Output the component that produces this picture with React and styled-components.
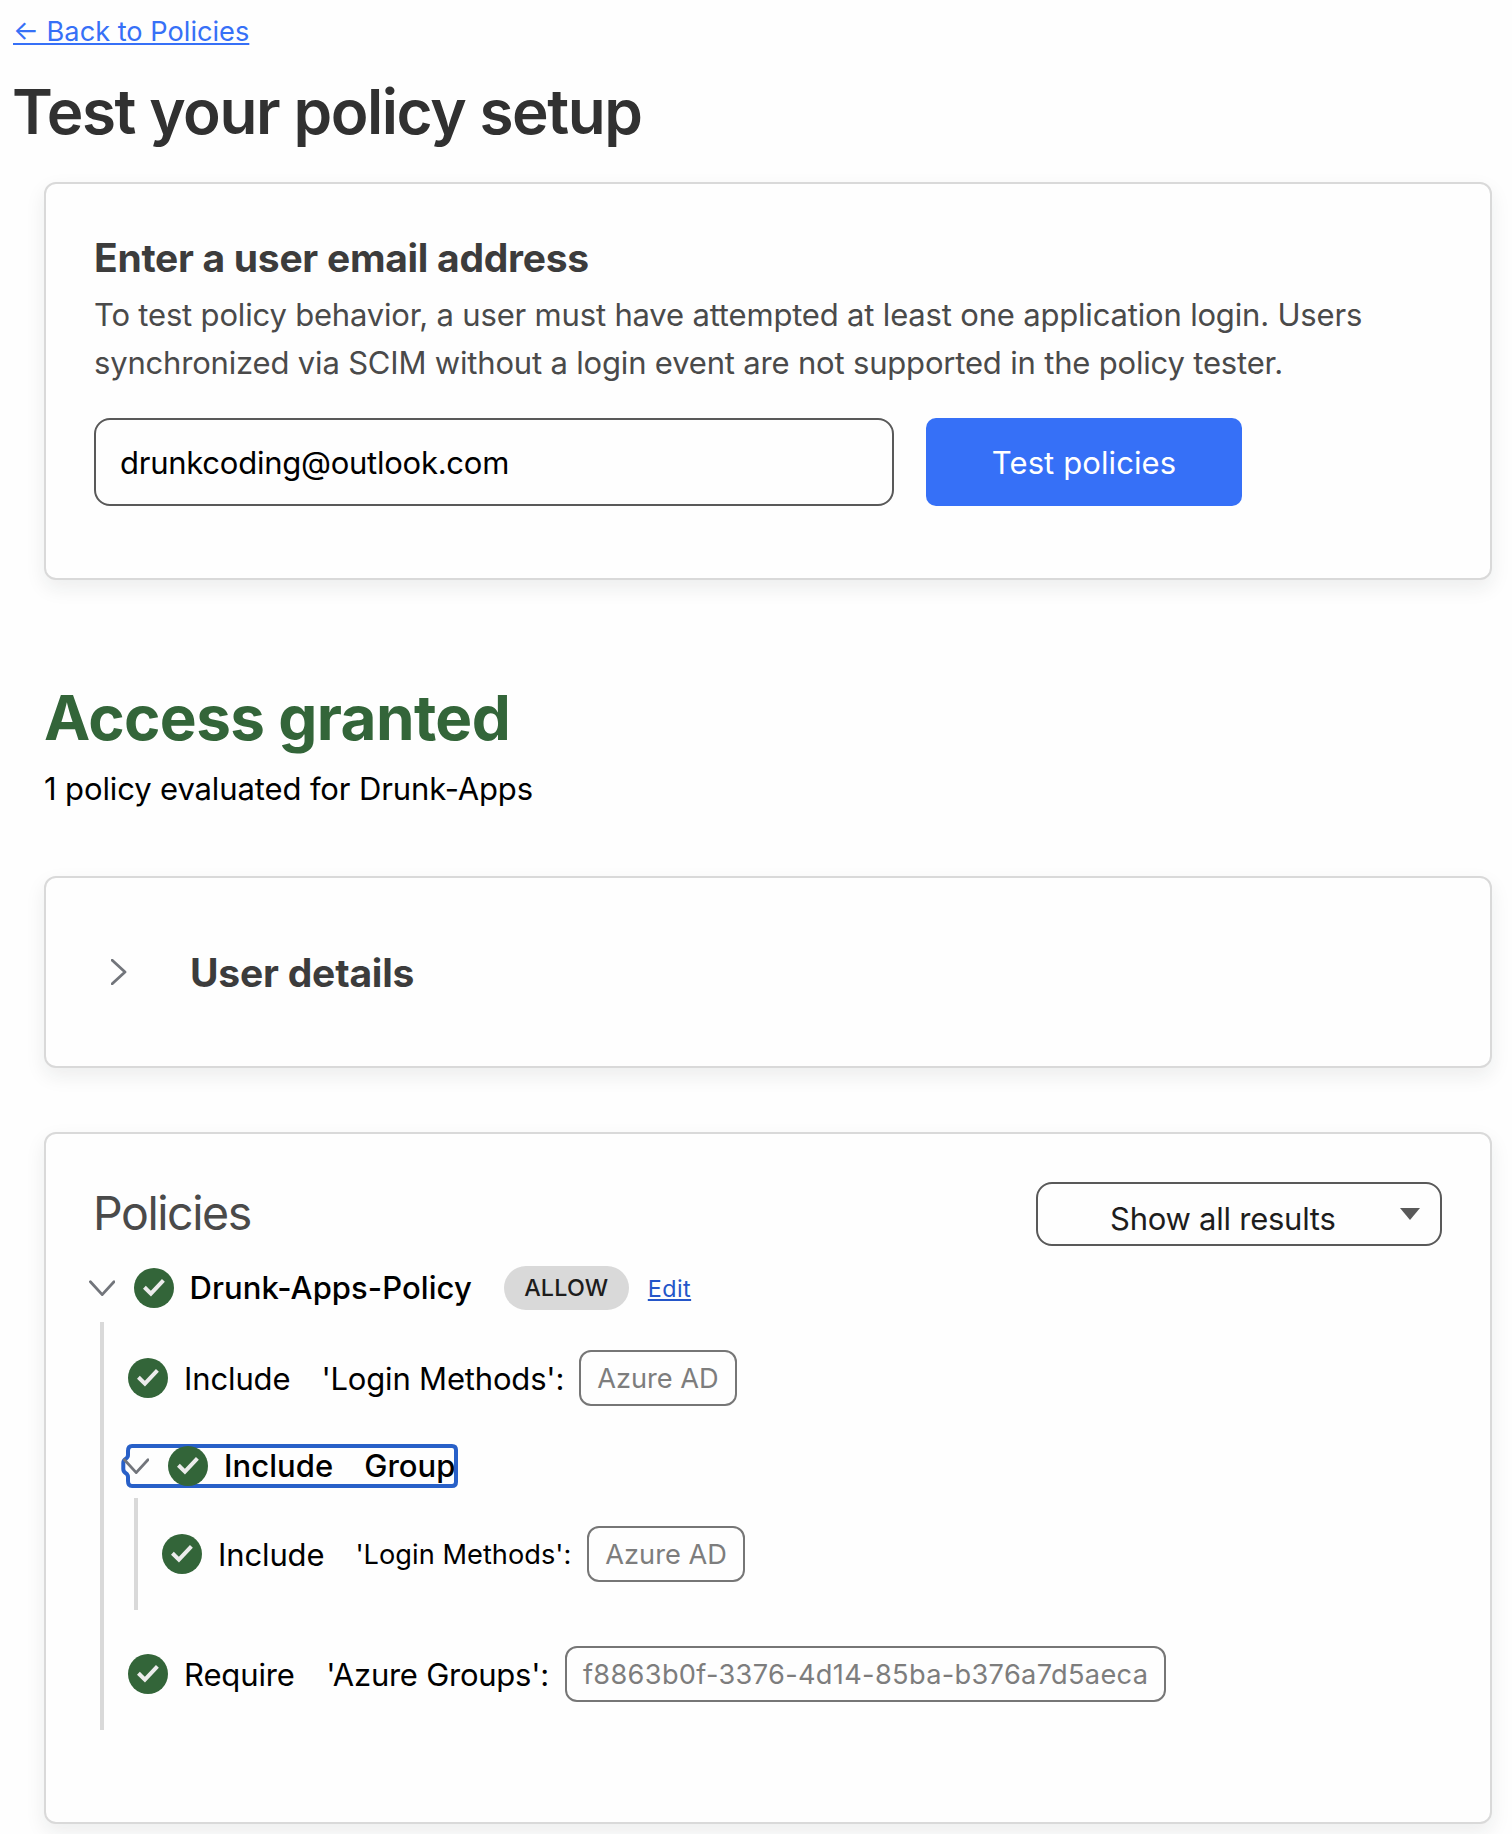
import React from 'react';
import styled, { createGlobalStyle } from 'styled-components';

const GlobalStyle = createGlobalStyle`
  * { box-sizing: border-box; }
  body {
    margin: 0;
    background: #fefefe;
    color: #000;
    font-family: Inter, 'Liberation Sans', sans-serif;
  }
  h1, h2, h3, p { margin: 0; }
`;

const Page = styled.main`
  width: 1512px;
  height: 1834px;
  overflow: hidden;
  padding-top: 12px;
  display: flex;
  flex-direction: column;
`;

const Header = styled.header`
  display: flex;
  flex-direction: column;
  align-items: flex-start;
  gap: 24px;
  padding-left: 13px;
`;

const BackLink = styled.a`
  font-size: 27.2px;
  line-height: 40px;
  color: #3670f7;
  text-decoration: underline;
  text-decoration-thickness: 2px;
  text-underline-offset: 2px;
  text-decoration-skip-ink: none;
`;

const PageTitle = styled.h1`
  margin-left: -1px;
  font-size: 62px;
  font-weight: 620;
  line-height: 72px;
  letter-spacing: -1.42px;
  color: #313131;
`;

const Content = styled.div`
  display: flex;
  flex-direction: column;
  margin: 34px 20px 0 44px;
`;

const Card = styled.section`
  height: ${(p) => p.$height}px;
  margin-top: ${(p) => p.$gap || 0}px;
  padding: ${(p) => p.$padTop || 0}px 48px 0;
  border: 2px solid #d9d9d9;
  border-radius: 12px;
  background: #fefefe;
  box-shadow: 0 8px 20px rgba(20, 40, 40, 0.08);
`;

const CardTitle = styled.h2`
  padding-top: ${(p) => p.$drop || 0}px;
  font-size: 39px;
  font-weight: 650;
  line-height: 48px;
  letter-spacing: ${(p) => p.$tracking || 0}px;
  color: #3c3c3c;
`;

const Description = styled.p`
  margin-top: 9px;
  font-size: 31px;
  line-height: 48px;
  letter-spacing: -0.18px;
  color: #4a4a4a;
`;

const Form = styled.form`
  display: flex;
  gap: 32px;
  margin-top: 31px;
`;

const EmailInput = styled.input`
  width: 800px;
  height: 88px;
  padding: 0 24px;
  border: 2px solid #595959;
  border-radius: 16px;
  background: transparent;
  color: #000;
  font: 400 31px Inter, 'Liberation Sans', sans-serif;
  letter-spacing: -0.25px;
  outline: none;
`;

const SubmitButton = styled.button`
  width: 316px;
  height: 88px;
  padding: 0;
  border: 0;
  border-radius: 10px;
  background: #3670f7;
  color: #fff;
  font: 400 31px Inter, 'Liberation Sans', sans-serif;
  letter-spacing: 0.1px;
`;

const Verdict = styled.h2`
  margin-top: 98px;
  font-size: 62px;
  font-weight: 700;
  line-height: 80px;
  letter-spacing: -0.65px;
  color: #336539;
`;

const Summary = styled.p`
  margin-top: 7px;
  font-size: 31px;
  line-height: 48px;
  letter-spacing: -0.12px;
`;

const DetailsToggle = styled.div`
  display: flex;
  align-items: center;
  gap: 63px;
  height: 100%;
  padding-left: 17px;
`;

const PoliciesHeader = styled.div`
  display: flex;
  justify-content: space-between;
  height: 64px;
`;

const PoliciesTitle = styled.h2`
  margin-left: -1px;
  font-size: 46.5px;
  font-weight: 400;
  line-height: 63px;
  letter-spacing: -1.45px;
  color: #4a4a4a;
`;

const Select = styled.div`
  display: flex;
  align-items: center;
  justify-content: space-between;
  width: 406px;
  height: 64px;
  padding: 0 20px 0 72px;
  border: 2px solid #595959;
  border-radius: 16px;
  color: #1d1d1d;
`;

const SelectText = styled.span`
  padding-top: 8px;
  font-size: 31px;
  letter-spacing: -0.25px;
`;

const PolicyRow = styled.div`
  display: flex;
  align-items: center;
  height: 44px;
  margin: 20px 0 0 -5px;
`;

const GroupRow = styled.div`
  position: relative;
  display: flex;
  align-items: center;
  height: 40px;
  margin: 40px 0 0 -5px;
`;

const FocusRing = styled.svg`
  position: absolute;
  left: -3px;
  top: -3px;
  overflow: visible;
`;

const RuleRow = styled.div`
  display: flex;
  align-items: center;
  height: 56px;
  margin-top: ${(p) => p.$gap || 0}px;
`;

const Branch = styled.div`
  margin: 12px 0 0 6px;
  padding: 28px 0 28px 24px;
  border-left: 4px solid #d9d9d9;
`;

const Label = styled.span`
  margin-left: ${(p) => p.$gap}px;
  padding-bottom: ${(p) => (p.$strong ? 2 : 0)}px;
  font-size: ${(p) => (p.$small ? 27.2 : 31)}px;
  font-weight: ${(p) => (p.$strong ? 500 : 400)};
  letter-spacing: ${(p) => p.$tracking || 0}px;
  white-space: nowrap;
`;

const Pill = styled.span`
  width: 125px;
  height: 44px;
  margin-left: 32px;
  border-radius: 22px;
  background: #d9d9d9;
  color: #1d1d1d;
  font-size: 23.3px;
  font-weight: 450;
  letter-spacing: 0.2px;
  line-height: 43px;
  text-align: center;
`;

const EditLink = styled.a`
  margin-left: 19px;
  padding-top: 1px;
  color: #2456c9;
  font-size: 23.3px;
  letter-spacing: 0.45px;
  text-decoration: underline;
  text-decoration-thickness: 2px;
  text-underline-offset: 2px;
`;

const Chip = styled.span`
  height: 56px;
  margin-left: ${(p) => p.$gap}px;
  padding: 0 16px;
  border: 2px solid #767676;
  border-radius: 12px;
  color: #7d7d7d;
  font-size: 27.2px;
  letter-spacing: ${(p) => p.$tracking || 0}px;
  line-height: 54px;
  white-space: nowrap;
`;

const IconSvg = styled.svg`
  display: block;
  flex: none;
  position: relative;
  z-index: ${(p) => (p.$raised ? 1 : 'auto')};
  margin-right: ${(p) => p.$after || 0}px;
`;

const ChevronRight = () => (
  <IconSvg width="16" height="26" viewBox="0 0 16 26" fill="none">
    <path d="M1.2 1.2L14 13L1.2 24.8" stroke="#72757b" strokeWidth="2.8" strokeLinecap="round" strokeLinejoin="round" />
  </IconSvg>
);

const ChevronDown = () => (
  <IconSvg width="26" height="18" viewBox="0 0 26 18" fill="none" $after={19} $raised>
    <path d="M1.4 2.7L13.2 15.6L25 2.7" stroke="#72757b" strokeWidth="2.8" strokeLinecap="round" strokeLinejoin="round" />
  </IconSvg>
);

const CheckIcon = () => (
  <IconSvg width="40" height="40" viewBox="0 0 40 40" fill="none">
    <circle cx="20" cy="20" r="20" fill="#336539" />
    <path d="M10.4 19.3L16.9 25.6L29.4 12.4" stroke="#ececec" strokeWidth="4" />
  </IconSvg>
);

const Caret = () => (
  <IconSvg width="20" height="12" viewBox="0 0 20 12">
    <path d="M0 0H20L10 12Z" fill="#595959" />
  </IconSvg>
);

export default function App() {
  return (
    <>
      <GlobalStyle />
      <Page>
        <Header>
          <BackLink>← Back to Policies</BackLink>
          <PageTitle>Test your policy setup</PageTitle>
        </Header>
        <Content>
          <Card $height={398} $padTop={50}>
            <CardTitle $tracking={-0.28}>Enter a user email address</CardTitle>
            <Description>
              To test policy behavior, a user must have attempted at least one application login. Users
              synchronized via SCIM without a login event are not supported in the policy tester.
            </Description>
            <Form>
              <EmailInput defaultValue="drunkcoding@outlook.com" />
              <SubmitButton type="button">Test policies</SubmitButton>
            </Form>
          </Card>

          <Verdict>Access granted</Verdict>
          <Summary>1 policy evaluated for Drunk-Apps</Summary>

          <Card $height={192} $gap={63}>
            <DetailsToggle>
              <ChevronRight />
              <CardTitle $tracking={-0.2} $drop={2}>User details</CardTitle>
            </DetailsToggle>
          </Card>

          <Card $height={692} $gap={64} $padTop={48}>
            <PoliciesHeader>
              <PoliciesTitle>Policies</PoliciesTitle>
              <Select>
                <SelectText>Show all results</SelectText>
                <Caret />
              </Select>
            </PoliciesHeader>

            <PolicyRow>
              <ChevronDown />
              <CheckIcon />
              <Label $gap={15.5} $strong $tracking={0.06}>Drunk-Apps-Policy</Label>
              <Pill>ALLOW</Pill>
              <EditLink>Edit</EditLink>
            </PolicyRow>

            <Branch>
              <RuleRow>
                <CheckIcon />
                <Label $gap={16} $tracking={-0.12}>Include</Label>
                <Label $gap={31} $tracking={-0.18}>'Login Methods':</Label>
                <Chip $gap={15} $tracking={0}>Azure AD</Chip>
              </RuleRow>

              <GroupRow>
                <FocusRing width="340" height="46" viewBox="0 0 340 46" fill="none">
                  <path
                    d="M12 3H332C334.500 3 336 4.500 336 7V39C336 41.500 334.500 43 332 43H12C9 43 8 41 8 38V34C8 31.500 7 31 5.500 30C4 29 3.300 28 3.300 26V20C3.300 18 4 17 5.500 16C7 15 8 14.500 8 12V8C8 5 9 3 12 3Z"
                    stroke="#2860c8"
                    strokeWidth="4"
                  />
                </FocusRing>
                <ChevronDown />
                <CheckIcon />
                <Label $gap={16} $strong $tracking={0.05}>Include</Label>
                <Label $gap={31} $strong $tracking={0.05}>Group</Label>
              </GroupRow>

              <Branch>
                <RuleRow>
                  <CheckIcon />
                  <Label $gap={16} $tracking={-0.12}>Include</Label>
                  <Label $gap={31} $small $tracking={0.03}>'Login Methods':</Label>
                  <Chip $gap={16} $tracking={0}>Azure AD</Chip>
                </RuleRow>
              </Branch>

              <RuleRow $gap={36}>
                <CheckIcon />
                <Label $gap={16} $tracking={-0.12}>Require</Label>
                <Label $gap={31.5} $tracking={-0.25}>'Azure Groups':</Label>
                <Chip $gap={16} $tracking={0.32}>f8863b0f-3376-4d14-85ba-b376a7d5aeca</Chip>
              </RuleRow>
            </Branch>
          </Card>
        </Content>
      </Page>
    </>
  );
}
